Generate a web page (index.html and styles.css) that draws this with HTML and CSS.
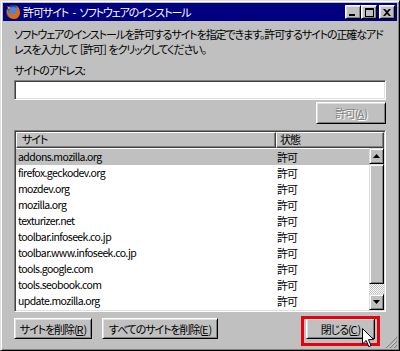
FILE: index.html
```html
<!DOCTYPE html>
<html lang="ja">
<head>
    <meta charset="UTF-8">
    <title>許可サイト - ソフトウェアのインストール</title>
    <link rel="stylesheet" href="styles.css">
</head>
<body>

    <div class="window">
        <div class="titlebar">
            <svg class="app-icon" viewBox="0 0 16 16" width="16" height="16">
                <circle cx="8" cy="8" r="7" fill="#23409a"/>
                <circle cx="8.5" cy="7.5" r="4.5" fill="#4d84d6"/>
                <path d="M2 5.5 C0.8 10.5 4.5 15 9 15 C13 15 15.2 11.5 15 8 C14.8 4.5 12.5 2 10 1.3 C12 3 12.6 6 11.2 8.2 C10 10.2 7 11 5 9.8 C3.6 9 3.1 7.4 3.8 6 Z" fill="#e36a0c"/>
                <path d="M2.2 2.2 L3.6 5.6 L5.8 3.4 Z" fill="#f5a623"/>
            </svg>
            <span class="title">許可サイト - ソフトウェアのインストール</span>
            <div class="caption-buttons">
                <span class="cap-btn">
                    <svg viewBox="0 0 8 7" width="8" height="7"><rect x="0" y="5" width="6" height="2" fill="#000"/></svg>
                </span>
                <span class="cap-btn">
                    <svg viewBox="0 0 9 9" width="9" height="9"><path d="M0 0 H9 V9 H0 Z M1 2 V8 H8 V2 Z" fill="#000" fill-rule="evenodd"/></svg>
                </span>
                <span class="cap-btn close">
                    <svg viewBox="0 0 8 7" width="8" height="7"><path d="M0 0 H2 L4 2 L6 0 H8 L5 3.5 L8 7 H6 L4 5 L2 7 H0 L3 3.5 Z" fill="#000"/></svg>
                </span>
            </div>
        </div>

        <div class="content">
            <p class="intro">ソフトウェアのインストールを許可するサイトを指定できます。許可するサイトの正確なアド<br>レスを入力して ［許可］ をクリックしてください。</p>

            <div class="field-label">サイトのアドレス:</div>
            <div class="text-input"></div>

            <div class="allow-row">
                <button class="btn disabled">許可(<u>A</u>)</button>
            </div>

            <div class="list">
                <div class="list-head">
                    <div class="head-cell col-site">サイト</div>
                    <div class="head-cell col-status">状態</div>
                </div>
                <div class="list-body">
                    <div class="rows">
                        <div class="row selected"><span class="cell-site">addons.mozilla.org</span><span class="cell-status">許可</span></div>
                        <div class="row"><span class="cell-site">firefox.geckodev.org</span><span class="cell-status">許可</span></div>
                        <div class="row"><span class="cell-site">mozdev.org</span><span class="cell-status">許可</span></div>
                        <div class="row"><span class="cell-site">mozilla.org</span><span class="cell-status">許可</span></div>
                        <div class="row"><span class="cell-site">texturizer.net</span><span class="cell-status">許可</span></div>
                        <div class="row"><span class="cell-site">toolbar.infoseek.co.jp</span><span class="cell-status">許可</span></div>
                        <div class="row"><span class="cell-site">toolbar.www.infoseek.co.jp</span><span class="cell-status">許可</span></div>
                        <div class="row"><span class="cell-site">tools.google.com</span><span class="cell-status">許可</span></div>
                        <div class="row"><span class="cell-site">tools.seobook.com</span><span class="cell-status">許可</span></div>
                        <div class="row"><span class="cell-site">update.mozilla.org</span><span class="cell-status">許可</span></div>
                    </div>
                    <div class="scrollbar">
                        <div class="sb-btn">
                            <svg viewBox="0 0 7 4" width="7" height="4"><path d="M3.5 0 L7 4 H0 Z" fill="#000"/></svg>
                        </div>
                        <div class="sb-thumb"></div>
                        <div class="sb-track"></div>
                        <div class="sb-btn">
                            <svg viewBox="0 0 7 4" width="7" height="4"><path d="M0 0 H7 L3.5 4 Z" fill="#000"/></svg>
                        </div>
                    </div>
                </div>
            </div>

            <div class="footer">
                <button class="btn btn-remove">サイトを削除(<u>R</u>)</button>
                <button class="btn btn-remove-all">すべてのサイトを削除(<u>E</u>)</button>
                <button class="btn btn-close">閉じる(<u>C</u>)</button>
            </div>
        </div>

        <!-- annotation over the screenshot -->
        <div class="highlight"></div>
        <svg class="cursor" viewBox="0 0 12 20" width="12" height="20">
            <path d="M0.5 0.5 L0.5 16 L4.2 12.4 L6.8 18.6 L9 17.6 L6.5 11.6 L11.5 11.6 Z" fill="#fff" stroke="#000" stroke-width="1"/>
        </svg>
        <svg class="grip" viewBox="0 0 12 12" width="12" height="12">
            <path d="M11 1 L1 11 M11 5 L5 11 M11 9 L9 11" stroke="#fff" stroke-width="1"/>
            <path d="M12 1 L1 12 M12 5 L5 12 M12 9 L9 12" stroke="#808080" stroke-width="1.2"/>
        </svg>
    </div>

</body>
</html>
```

FILE: styles.css
```css
* { margin: 0; padding: 0; box-sizing: border-box; }
body { background: #c0c0c0; font-family: "Noto Sans CJK JP", sans-serif; font-size: 11px; letter-spacing: -1.1px; color: #000; font-feature-settings: "palt"; }

.window { position: relative; width: 400px; height: 351px; background: #c0c0c0; border: 1px solid; border-color: #dfdfdf #000 #000 #dfdfdf; box-shadow: inset 1px 1px #fff, inset -1px -1px #808080; padding: 2px; display: flex; flex-direction: column; }

.titlebar { height: 18px; background: #000080; color: #fff; display: flex; align-items: center; padding: 0 2px; }
.app-icon { flex: none; }
.title { margin-left: 2px; line-height: 18px; white-space: nowrap; word-spacing: 3px; }
.caption-buttons { margin-left: auto; display: flex; }
.cap-btn { width: 16px; height: 14px; background: #c0c0c0; border: 1px solid; border-color: #fff #000 #000 #fff; box-shadow: inset 1px 1px #dfdfdf, inset -1px -1px #808080; display: flex; align-items: center; justify-content: center; }
.cap-btn.close { margin-left: 2px; }

.content { flex: 1; padding: 0 11px; display: flex; flex-direction: column; }
.intro { margin-top: 6px; line-height: 15px; white-space: nowrap; }
.field-label { margin-top: 6px; line-height: 15px; }
.text-input { margin-top: 2px; height: 20px; background: #fff; border: 1px solid; border-color: #808080 #fff #fff #808080; box-shadow: inset 1px 1px #404040, inset -1px -1px #dfdfdf; }

.btn { height: 22px; background: #c0c0c0; font: inherit; letter-spacing: inherit; font-feature-settings: "palt"; color: #000; white-space: nowrap; border: 1px solid; border-color: #fff #000 #000 #fff; box-shadow: inset 1px 1px #dfdfdf, inset -1px -1px #808080; display: flex; align-items: center; justify-content: center; }
.btn u { text-underline-offset: 1px; letter-spacing: 0; }
.btn.disabled { color: #808080; text-shadow: 1px 1px #fff; }

.allow-row { margin-top: 2px; display: flex; justify-content: flex-end; }
.allow-row .btn { width: 70px; }

.list { margin-top: 6px; height: 182px; border: 1px solid; border-color: #808080 #fff #fff #808080; box-shadow: inset 1px 1px #404040, inset -1px -1px #dfdfdf; padding: 1px; display: flex; flex-direction: column; background: #fff; }
.list-head { display: flex; height: 16px; }
.head-cell { background: #c0c0c0; border: 1px solid; border-color: #fff #404040 #404040 #fff; box-shadow: inset -1px -1px #808080; line-height: 13px; padding-left: 5px; }
.col-site { width: 260px; }
.col-status { flex: 1; padding-left: 3px; }

.list-body { flex: 1; display: flex; }
.rows { flex: 1; padding-top: 1px; }
.row { display: flex; height: 16px; line-height: 16px; }
.row.selected { background: #c0c0c0; }
.cell-site { width: 260px; padding-left: 2px; white-space: nowrap; font-size: 10.5px; letter-spacing: -0.6px; }
.cell-status { padding-left: 1px; }

.scrollbar { width: 15px; display: flex; flex-direction: column; }
.sb-btn, .sb-thumb { background: #c0c0c0; border: 1px solid; border-color: #dfdfdf #000 #000 #dfdfdf; box-shadow: inset 1px 1px #fff, inset -1px -1px #808080; }
.sb-btn { height: 16px; display: flex; align-items: center; justify-content: center; }
.sb-thumb { height: 120px; }
.sb-track { flex: 1; background: repeating-conic-gradient(#c0c0c0 0 25%, #fff 0 50%) 0 0 / 2px 2px; }

.footer { margin-top: 6px; display: flex; gap: 10px; }
.footer .btn { height: 21px; }
.btn-remove { width: 78px; }
.btn-remove-all { width: 116px; }
.btn-close { width: 69px; margin-left: auto; margin-right: 11px; }

.highlight { position: absolute; left: 300px; top: 315px; width: 79px; height: 30px; border: 3px solid #e8000b; }
.cursor { position: absolute; left: 361px; top: 327px; }
.grip { position: absolute; right: 2px; bottom: 2px; }
```
